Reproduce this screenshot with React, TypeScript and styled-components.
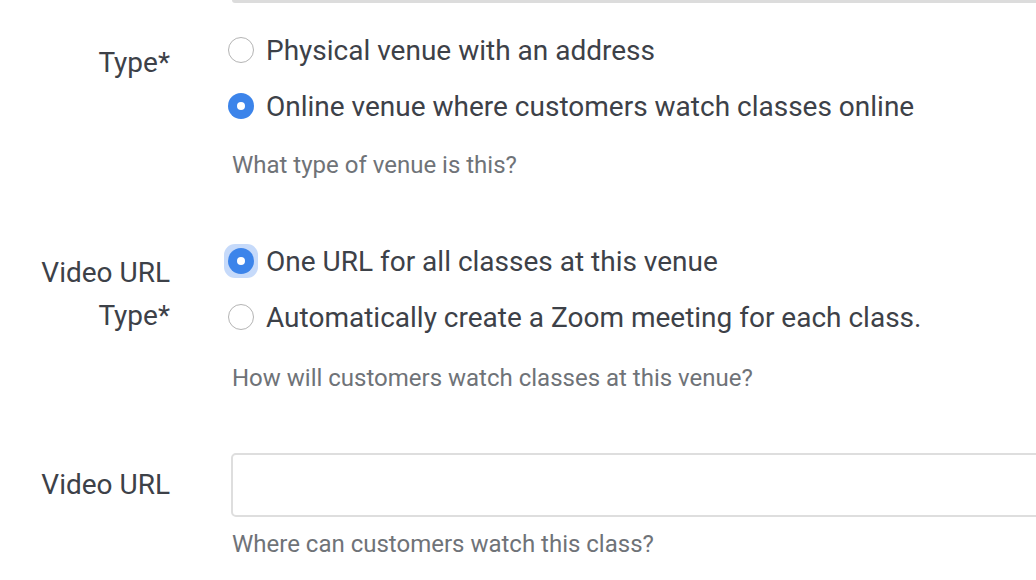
import React from "react";
import styled, { createGlobalStyle } from "styled-components";

const Global = createGlobalStyle`
  html, body { margin: 0; padding: 0; background: #ffffff; }
  body { font-family: Roboto, "Liberation Sans", Arial, sans-serif; overflow: hidden; }
  * { box-sizing: border-box; }
`;

const Page = styled.div`
  width: 1036px;
  height: 580px;
  overflow: hidden;
  background: #fff;
`;

const PrevInputEdge = styled.div`
  margin-left: 232px;
  width: 900px;
  height: 3px;
  background: #dcdcdc;
  border-bottom-left-radius: 4px;
`;

const Field = styled.div<{ $top: number }>`
  display: grid;
  grid-template-columns: 170px 1fr;
  column-gap: 61px;
  margin-top: ${(p) => p.$top}px;
`;

const Label = styled.div<{ $pad: number }>`
  text-align: right;
  font-size: 28px;
  line-height: 43px;
  color: #3d4148;
  padding-top: ${(p) => p.$pad}px;
  white-space: nowrap;
`;

const Control = styled.div`
  display: flex;
  flex-direction: column;
`;

const Option = styled.label`
  display: flex;
  align-items: center;
  height: 56px;
  gap: 12px;
  margin-left: -3px;
  font-size: 28px;
  color: #3d4148;
  white-space: nowrap;
`;

const Radio = styled.span<{ $checked?: boolean; $focused?: boolean }>`
  position: relative;
  flex: none;
  width: 26px;
  height: 26px;
  border-radius: 50%;
  border: ${(p) => (p.$checked ? "none" : "1.5px solid #b4b4b4")};
  background: ${(p) => (p.$checked ? "#3c84ea" : "#fff")};
  display: flex;
  align-items: center;
  justify-content: center;
  &::after {
    content: "";
    display: ${(p) => (p.$checked ? "block" : "none")};
    width: 8px;
    height: 8px;
    border-radius: 50%;
    background: #fff;
  }
  &::before {
    content: "";
    display: ${(p) => (p.$focused ? "block" : "none")};
    position: absolute;
    inset: -4px;
    border-radius: 11px;
    background: rgba(92, 150, 240, 0.35);
    z-index: -1;
  }
`;

const RadioWrap = styled.span`
  position: relative;
  z-index: 0;
  display: flex;
`;

const Help = styled.div<{ $gap: number }>`
  margin-top: ${(p) => p.$gap}px;
  margin-left: 1px;
  font-size: 24px;
  line-height: 28px;
  color: #6f7378;
  white-space: nowrap;
`;

const Input = styled.input`
  width: 900px;
  height: 64px;
  border: 2px solid #dedede;
  border-radius: 5px;
  background: #fff;
  font: inherit;
  font-size: 28px;
  padding: 0 14px;
  outline: none;
`;

type Opt = { text: string; checked?: boolean; focused?: boolean };

const RadioOption: React.FC<Opt> = ({ text, checked, focused }) => (
  <Option>
    <RadioWrap>
      <Radio $checked={checked} $focused={focused} />
    </RadioWrap>
    {text}
  </Option>
);

export default function App() {
  return (
    <Page>
      <Global />
      <PrevInputEdge />
      <Field $top={19}>
        <Label $pad={19}>Type*</Label>
        <Control>
          <RadioOption text="Physical venue with an address" />
          <RadioOption text="Online venue where customers watch classes online" checked />
          <Help $gap={17}>What type of venue is this?</Help>
        </Control>
      </Field>
      <Field $top={54}>
        <Label $pad={18}>
          Video URL
          <br />
          Type*
        </Label>
        <Control>
          <RadioOption text="One URL for all classes at this venue" checked focused />
          <RadioOption text="Automatically create a Zoom meeting for each class." />
          <Help $gap={19}>How will customers watch classes at this venue?</Help>
        </Control>
      </Field>
      <Field $top={61}>
        <Label $pad={10}>Video URL</Label>
        <Control>
          <Input type="text" />
          <Help $gap={13}>Where can customers watch this class?</Help>
        </Control>
      </Field>
    </Page>
  );
}
